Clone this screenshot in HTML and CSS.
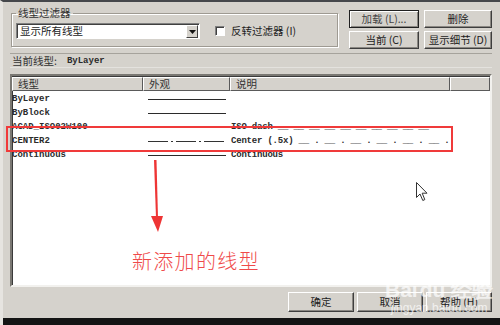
FILE: index.html
```html
<!DOCTYPE html>
<html lang="zh">
<head>
  <meta charset="UTF-8">
  <title>线型管理器</title>
  <link rel="stylesheet" href="styles.css">
</head>
<body>

<div class="dialog">
  <div class="top">
    <fieldset class="filter">
      <legend>线型过滤器</legend>
      <div class="filter-row">
        <div class="select">
          <span class="select-text">显示所有线型</span>
          <span class="drop">
            <svg width="7" height="4" viewBox="0 0 7 4"><path d="M0 0h7L3.5 4z" fill="#111"/></svg>
          </span>
        </div>
        <label class="check"><span class="box"></span>反转过滤器 (I)</label>
      </div>
    </fieldset>

    <div class="btn-grid">
      <button class="btn default">加载 (L)...</button>
      <button class="btn">删除</button>
      <button class="btn">当前 (C)</button>
      <button class="btn">显示细节 (D)</button>
    </div>
  </div>

  <div class="current">
    <span>当前线型:</span>
    <span class="mono">ByLayer</span>
  </div>

  <div class="list">
    <div class="list-head">
      <div class="col">线型</div>
      <div class="col">外观</div>
      <div class="col">说明</div>
      <div class="col"></div>
    </div>
    <div class="row">
      <div class="name">ByLayer</div>
      <div class="look"><span class="solid"></span></div>
      <div class="desc"></div>
    </div>
    <div class="row">
      <div class="name">ByBlock</div>
      <div class="look"><span class="solid"></span></div>
      <div class="desc"></div>
    </div>
    <div class="row">
      <div class="name">ACAD_ISO02W100</div>
      <div class="look"></div>
      <div class="desc">ISO dash __ __ __ __ __ __ __ __ __ __</div>
    </div>
    <div class="row">
      <div class="name">CENTER2</div>
      <div class="look">
        <svg width="76" height="3" viewBox="0 0 76 3"><line x1="0" y1="1.5" x2="76" y2="1.5" stroke="#333" stroke-width="1" stroke-dasharray="20 3 2 3"/></svg>
      </div>
      <div class="desc">Center (.5x) __ . __ . __ . __ . __ . __ .</div>
    </div>
    <div class="row">
      <div class="name">Continuous</div>
      <div class="look"><span class="solid"></span></div>
      <div class="desc">Continuous</div>
    </div>
  </div>

  <div class="footer">
    <button class="btn big">确定</button>
    <button class="btn big">取消</button>
    <button class="btn big">帮助 (H)</button>
  </div>
</div>

<div class="taskbar"></div>

<!-- annotations drawn over the screenshot -->
<div class="mark"></div>
<svg class="arrow" width="20" height="76" viewBox="0 0 20 76">
  <path d="M6 0 L8.5 0 L10 58 L8 58 Z" fill="#ee3535"/>
  <path d="M3 56 L15 56 L10 72 Z" fill="#ee3535"/>
</svg>
<div class="note">新添加的线型</div>

<svg class="cursor" width="12" height="20" viewBox="0 0 12 20">
  <path d="M0.5 0.5 L0.5 15.5 L4 12 L6.8 18.5 L8.8 17.6 L6.2 11.2 L11 11.2 Z" fill="#fff" stroke="#333" stroke-width="1"/>
</svg>

<div class="watermark">
  <div class="wm-logo">Bai<span class="paw">du</span> 经验</div>
  <div class="wm-url">jingyan.baidu.com</div>
</div>

</body>
</html>
```

FILE: styles.css
```css
* {
  box-sizing: border-box;
}
body {
  margin: 0;
  width: 500px;
  height: 325px;
  overflow: hidden;
  position: relative;
  background: #d5d2cc;
  border-top: 2px solid #45474b;
  border-left: 3px solid #e6e4e0;
  font-family: "Noto Sans CJK SC", "Liberation Sans", sans-serif;
  font-size: 10.5px;
  color: #1c1c1c;
}
.mono {
  font-family: "Liberation Mono", monospace;
  font-size: 9px;
  font-weight: bold;
  color: #2b2b2b;
}
.dialog {
  padding: 5px 8px 0 7px;
}

/* top area */
.top {
  display: flex;
  justify-content: space-between;
  align-items: flex-start;
}
.filter {
  margin: 0 0 0 1px;
  width: 327px;
  padding: 4px 4px 7px 4px;
  border: 1px solid #9e9a92;
  box-shadow: inset 1px 1px 0 #fff, 1px 1px 0 #fff;
}
.filter legend {
  padding: 0 2px;
  line-height: 12px;
  color: #333;
}
.filter-row {
  display: flex;
  align-items: center;
  gap: 15px;
}
.select {
  width: 184px;
  height: 16px;
  display: flex;
  align-items: center;
  justify-content: space-between;
  background: #fff;
  border: 1px solid;
  border-color: #808080 #fff #fff #808080;
  box-shadow: inset 1px 1px 0 #404040;
}
.select-text {
  padding-left: 3px;
  line-height: 14px;
}
.drop {
  width: 12px;
  height: 13px;
  margin: 1px 1px 0 0;
  display: flex;
  align-items: center;
  justify-content: center;
  background: #d5d2cc;
  border: 1px solid;
  border-color: #fff #404040 #404040 #fff;
}
.check {
  display: flex;
  align-items: center;
  gap: 6px;
  line-height: 12px;
}
.box {
  width: 10px;
  height: 10px;
  background: #fff;
  border: 1px solid;
  border-color: #808080 #fff #fff #808080;
  box-shadow: inset 1px 1px 0 #404040;
}
.btn-grid {
  margin-top: 3px;
  display: grid;
  grid-template-columns: 70px 68px;
  grid-auto-rows: 18px;
  gap: 3px 5px;
}
.btn {
  margin: 0;
  padding: 0;
  font: inherit;
  color: #1c1c1c;
  background: #d5d2cc;
  border: 1px solid;
  border-color: #fff #3e3e3e #3e3e3e #fff;
  box-shadow: inset -1px -1px 0 #8a8782;
  line-height: 14px;
}
.btn.default {
  border-color: #202020;
  box-shadow: inset 1px 1px 0 #fff, inset -1px -1px 0 #8a8782;
  color: #444;
}

/* current line type */
.current {
  margin-top: 4px;
  height: 15px;
  display: flex;
  align-items: center;
  gap: 10px;
  padding-left: 2px;
  border-top: 1px solid #a6a39c;
  border-bottom: 1px solid #e4e2de;
  color: #333;
}

/* list view */
.list {
  margin-top: 6px;
  height: 213px;
  background: #fff;
  border: 2px solid;
  border-color: #7a7873 #f2f1ee #f2f1ee #7a7873;
  box-shadow: inset 1px 1px 0 #3a3a3a;
  padding-top: 1px;
}
.list-head,
.row {
  display: grid;
  grid-template-columns: 131px 87px 220px 1fr;
}
.list-head {
  height: 14px;
  background: #d5d2cc;
  margin-bottom: 1px;
}
.list-head .col {
  padding-left: 5px;
  line-height: 12px;
  border: 1px solid;
  border-color: #fff #5a5a5a #5a5a5a #fff;
  color: #333;
}
.row {
  height: 14px;
  align-items: center;
  font-family: "Liberation Mono", monospace;
  font-size: 9px;
  font-weight: bold;
  color: #2b2b2b;
  white-space: nowrap;
}
.look {
  padding-left: 5px;
  display: flex;
  align-items: center;
}
.solid {
  width: 78px;
  border-top: 1px solid #2b2b2b;
}
.desc {
  padding-left: 1px;
  letter-spacing: -0.2px;
}

/* bottom buttons */
.footer {
  margin-top: 5px;
  display: flex;
  justify-content: flex-end;
  gap: 3px;
}
.btn.big {
  width: 66px;
  height: 20px;
}
.taskbar {
  position: absolute;
  left: -3px;
  right: 0;
  top: 316px;
  height: 10px;
  background: #141414;
}

/* annotation overlays */
.mark {
  position: absolute;
  left: 3px;
  top: 124px;
  width: 447px;
  height: 26px;
  border: 2px solid #f03a3a;
}
.arrow {
  position: absolute;
  left: 145px;
  top: 158px;
}
.note {
  position: absolute;
  left: 129px;
  top: 244px;
  font-size: 20px;
  letter-spacing: 1.3px;
  color: #ef4a4a;
  font-weight: 300;
}
.cursor {
  position: absolute;
  left: 413px;
  top: 180px;
}
.watermark {
  position: absolute;
  left: 382px;
  top: 276px;
  color: rgba(255, 255, 255, 0.7);
  font-family: "Liberation Sans", sans-serif;
  text-align: center;
}
.wm-logo {
  font-size: 21px;
  font-weight: bold;
  line-height: 24px;
}
.paw {
  margin-left: 2px;
}
.wm-url {
  font-size: 12px;
  line-height: 13px;
}
```
